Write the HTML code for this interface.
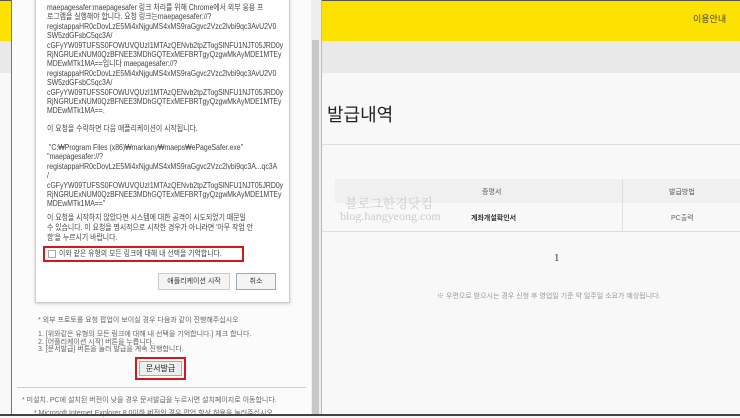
<!DOCTYPE html>
<html><head><meta charset="utf-8"><style>
*{margin:0;padding:0;box-sizing:border-box}
body{width:740px;height:416px;overflow:hidden;position:relative;background:#f8f8f8;font-family:"Liberation Sans","Noto Sans CJK KR",sans-serif;color:#333}
.a{position:absolute;white-space:nowrap}
.t{font-size:8px;line-height:9.4px;color:#444;transform:scaleX(0.86);transform-origin:0 0}
</style></head><body>
<div class="a" style="left:0;top:0;width:740px;height:41px;background:#fde100"></div>
<div class="a" style="left:0;top:41px;width:740px;height:32px;background:#e9e9e9"></div>
<div class="a" style="left:0;top:0;width:740px;height:1px;background:#555"></div>
<div class="a" style="left:693px;top:12px;font-size:9px;color:#444">이용안내</div>
<div class="a" style="left:327px;top:101px;font-size:18px;color:#222">발급내역</div>
<div class="a" style="left:322px;top:144px;width:418px;height:1px;background:#ddd"></div>
<div class="a" style="left:335px;top:179px;width:405px;height:24px;background:#f0f0f0"></div>
<div class="a" style="left:622px;top:179px;width:1px;height:52px;background:#ddd"></div>
<div class="a" style="left:322px;top:231px;width:418px;height:1px;background:#ddd"></div>
<div class="a" style="left:482px;top:187px;font-size:7px;color:#555">증명서</div>
<div class="a" style="left:669px;top:187px;font-size:7px;color:#555">발급방법</div>
<div class="a" style="left:471px;top:213px;font-size:7px;font-weight:bold;color:#333">계좌개설확인서</div>
<div class="a" style="left:671px;top:213px;font-size:7px;color:#666">PC출력</div>
<div class="a" style="left:554px;top:252px;font-size:11px;font-family:'Liberation Serif',serif">1</div>
<div class="a" style="left:437px;top:291px;font-size:7px;color:#999">※ 우편으로 받으시는 경우 신청 후 영업일 기준 약 일주일 소요가 예상됩니다.</div>
<div class="a" style="left:345px;top:193px;font-size:13px;color:#ccc;font-family:'Noto Serif CJK SC',serif">블로그한경닷컴</div>
<div class="a" style="left:340px;top:209px;font-size:12px;color:#ccc;font-family:'Liberation Serif',serif">blog.hangyeong.com</div>

<div class="a" style="left:11px;top:0;width:311px;height:416px;background:#fbfbfb;border-left:1px solid #777;border-right:1px solid #bbb"></div>
<div class="a" style="left:311px;top:0;width:10px;height:416px;background:#eee"></div>
<div class="a" style="left:312px;top:40px;width:7px;height:376px;background:#c8c8c8"></div>
<div class="a" style="left:35px;top:-2px;width:255px;height:305px;background:#fff;border:1px solid #ccc;box-shadow:0 1px 3px #ccc"></div>
<div class="a t" style="left:47px;top:3px">maepagesafer:maepagesafer 링크 처리를 위해 Chrome에서 외부 응용 프<br>로그램을 실행해야 합니다. 요청 링크는maepagesafer://?<br>registappaHR0cDovLzE5Mi4xNjguMS4xMS9raGgvc2Vzc2lvbi9qc3AvU2V0<br>SW5zdGFsbC5qc3A/<br>cGFyYW09TUFSS0FOWUVQUzI1MTAzQENvb2tpZTogSlNFU1NJT05JRD0y<br>RjNGRUExNUM0QzBFNEE3MDhGQTExMEFBRTgyQzgwMkAyMDE1MTEy<br>MDEwMTk1MA==입니다 maepagesafer://?<br>registappaHR0cDovLzE5Mi4xNjguMS4xMS9raGgvc2Vzc2lvbi9qc3AvU2V0<br>SW5zdGFsbC5qc3A/<br>cGFyYW09TUFSS0FOWUVQUzI1MTAzQENvb2tpZTogSlNFU1NJT05JRD0y<br>RjNGRUExNUM0QzBFNEE3MDhGQTExMEFBRTgyQzgwMkAyMDE1MTEy<br>MDEwMTk1MA==.</div>
<div class="a t" style="left:47px;top:124px">이 요청을 수락하면 다음 애플리케이션이 시작됩니다.</div>
<div class="a t" style="left:47px;top:143px">&nbsp;"C:₩Program Files (x86)₩markany₩maeps₩ePageSafer.exe"<br>"maepagesafer://?<br>registappaHR0cDovLzE5Mi4xNjguMS4xMS9raGgvc2Vzc2lvbi9qc3A...qc3A<br>/<br>cGFyYW09TUFSS0FOWUVQUzI1MTAzQENvb2tpZTogSlNFU1NJT05JRD0y<br>RjNGRUExNUM0QzBFNEE3MDhGQTExMEFBRTgyQzgwMkAyMDE1MTEy<br>MDEwMTk1MA=="</div>
<div class="a t" style="left:47px;top:213px;line-height:10px">이 요청을 시작하지 않았다면 시스템에 대한 공격이 시도되었기 때문일<br>수 있습니다. 이 요청을 명시적으로 시작한 경우가 아니라면 '아무 작업 안<br>함'을 누르시기 바랍니다.</div>
<div class="a" style="left:43px;top:246px;width:201px;height:16px;border:2px solid #d9151c"></div>
<div class="a" style="left:48px;top:250px;width:8px;height:8px;border:1px solid #aaa;background:#fff"></div>
<div class="a t" style="left:59px;top:249px">이와 같은 유형의 모든 링크에 대해 내 선택을 기억합니다.</div>
<div class="a" style="left:158px;top:273px;width:72px;height:17px;border:1px solid #ccc;background:#f4f4f4;font-size:7px;line-height:15px;text-align:center;color:#333">애플리케이션 시작</div>
<div class="a" style="left:236px;top:273px;width:40px;height:17px;border:1px solid #9ab;background:#f4f4f4;font-size:7px;line-height:15px;text-align:center;color:#333">취소</div>
<div class="a" style="left:38px;top:315px;font-size:7px;color:#666">* 외부 프로토롤 요청 팝업이 보이실 경우 다음과 같이 진행해주십시오</div>
<div class="a" style="left:38px;top:331px;font-size:7px;line-height:7.5px;color:#666">1. [위와같은 유형의 모든 링크에 대해 내 선택을 기억합니다.] 체크 합니다.<br>2. [어플리케이션 시작] 버튼을 누릅니다.<br>3. [문서발급] 버튼을 눌러 발급을 계속 진행합니다.</div>
<div class="a" style="left:135px;top:357px;width:51px;height:23px;border:2px solid #d9151c"></div>
<div class="a" style="left:139px;top:361px;width:43px;height:15px;border:1px solid #aaa;background:#eee;font-size:8px;line-height:13px;text-align:center;color:#222">문서발급</div>
<div class="a" style="left:17px;top:387px;width:289px;height:1px;background:#ccc"></div>
<div class="a" style="left:22px;top:395px;font-size:7px;color:#666">* 미설치, PC에 설치된 버전이 낮을 경우 문서발급을 누르시면 설치페이지로 이동합니다.</div>
<div class="a" style="left:34px;top:408px;font-size:7px;color:#666">* Microsoft Internet Explorer 8.0이하 버전의 경우 팝업 항상 허용을 눌러주십시오.</div>
<div class="a" style="left:0;top:414px;width:740px;height:2px;background:#444"></div>
</body></html>
